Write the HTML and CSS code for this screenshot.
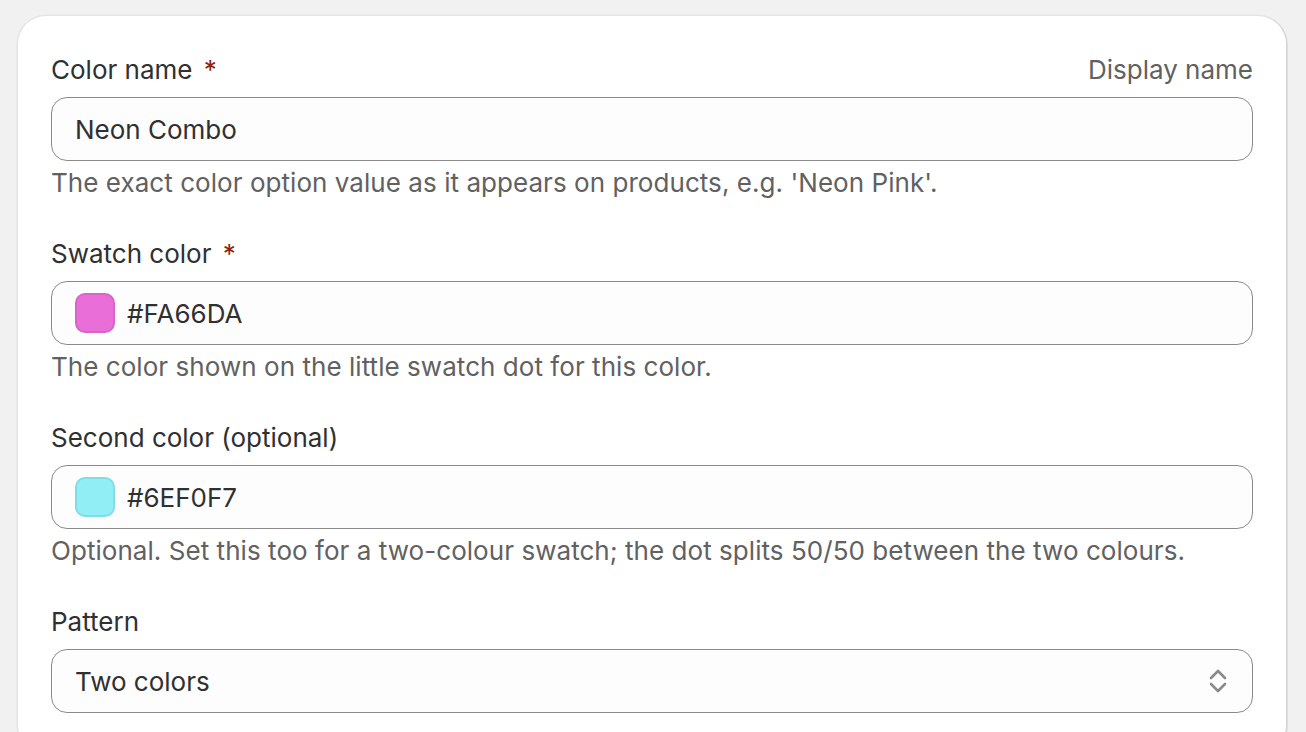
FILE: index.html
```html
<!DOCTYPE html>
<html lang="en">
<head>
    <meta charset="UTF-8">
    <meta name="viewport" content="width=device-width, initial-scale=1.0">
    <title>Edit color</title>
    <link rel="stylesheet" href="styles.css">
</head>
<body>
    <div class="card">
        <div class="field">
            <div class="label-row">
                <label for="color-name">Color name <span class="required">*</span></label>
                <span class="label-action">Display name</span>
            </div>
            <div class="box">
                <input type="text" id="color-name" value="Neon Combo">
            </div>
            <div class="help">The exact color option value as it appears on products, e.g. 'Neon Pink'.</div>
        </div>

        <div class="field">
            <div class="label-row">
                <label for="swatch">Swatch color <span class="required">*</span></label>
            </div>
            <div class="box with-swatch">
                <span class="swatch pink"></span>
                <input type="text" id="swatch" value="#FA66DA">
            </div>
            <div class="help">The color shown on the little swatch dot for this color.</div>
        </div>

        <div class="field">
            <div class="label-row">
                <label for="second">Second color (optional)</label>
            </div>
            <div class="box with-swatch">
                <span class="swatch cyan"></span>
                <input type="text" id="second" value="#6EF0F7">
            </div>
            <div class="help">Optional. Set this too for a two-colour swatch; the dot splits 50/50 between the two colours.</div>
        </div>

        <div class="field">
            <div class="label-row">
                <label for="pattern">Pattern</label>
            </div>
            <div class="box select-box">
                <select id="pattern">
                    <option>Solid</option>
                    <option selected>Two colors</option>
                </select>
                <svg class="chevrons" width="20" height="28" viewBox="0 0 20 28">
                    <polyline points="3,11 10,4 17,11" />
                    <polyline points="3,17 10,24 17,17" />
                </svg>
            </div>
        </div>
    </div>
</body>
</html>
```

FILE: styles.css
```css
body {
    margin: 0;
    padding: 16px 20px 0 18px;
    background-color: #f1f1f1;
    font-family: Inter, "Noto Sans", sans-serif;
    color: #303030;
    height: 100vh;
    box-sizing: border-box;
    overflow: hidden;
}

.card {
    background-color: #fff;
    border-radius: 28px;
    padding: 34px 33px 40px 33px;
    box-shadow: 0 0 0 1.5px rgba(0, 0, 0, 0.05), 1px 1px 0 1px rgba(0, 0, 0, 0.06);
    display: flex;
    flex-direction: column;
    gap: 31px;
}

.label-row {
    display: flex;
    justify-content: space-between;
    align-items: center;
    font-size: 26px;
    line-height: 40px;
    margin-bottom: 7px;
}

.label-row label {
    color: #303030;
}

.required {
    color: #8e1f0b;
    margin-left: 4px;
}

.label-action {
    color: #616161;
}

.box {
    position: relative;
    display: flex;
    align-items: center;
    height: 64px;
    box-sizing: border-box;
    border: 1px solid #8a8a8a;
    border-radius: 16px;
    background-color: #fdfdfd;
    padding: 0 23px;
}

.box input,
.box select {
    flex: 1;
    border: none;
    outline: none;
    background: transparent;
    font-family: inherit;
    font-size: 26px;
    color: #303030;
    padding: 0;
    margin: 0;
    height: 100%;
}

.with-swatch {
    gap: 12px;
}

.swatch {
    width: 40px;
    height: 40px;
    box-sizing: border-box;
    border-radius: 10px;
    flex-shrink: 0;
}

.swatch.pink {
    background-color: #e96ed8;
    border: 2px solid #d964c9;
}

.swatch.cyan {
    background-color: #90eef4;
    border: 2px solid #80dde4;
}

.select-box select {
    appearance: none;
    -webkit-appearance: none;
    cursor: pointer;
}

.chevrons {
    position: absolute;
    right: 24px;
    top: 17px;
    pointer-events: none;
}

.chevrons polyline {
    fill: none;
    stroke: #8a8a8a;
    stroke-width: 2.6;
    stroke-linecap: round;
    stroke-linejoin: round;
}

.help {
    font-size: 26px;
    line-height: 40px;
    color: #616161;
    margin-top: 2px;
    letter-spacing: 0.05px;
}
```
